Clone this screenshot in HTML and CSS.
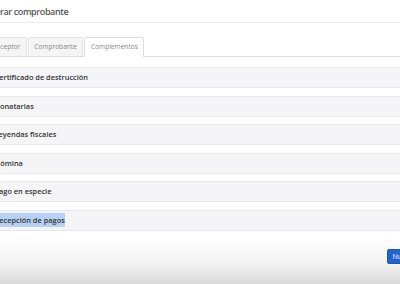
FILE: index.html
```html
<!DOCTYPE html>
<html lang="es">
<head>
    <meta charset="UTF-8">
    <meta name="viewport" content="width=device-width, initial-scale=1.0">
    <title>Generar comprobante</title>
    <link rel="stylesheet" href="styles.css">
</head>
<body>
    <div class="page">
        <div class="page-header">
            <h1>Generar comprobante</h1>
        </div>

        <ul class="tabs">
            <li class="tab">Receptor</li>
            <li class="tab">Comprobante</li>
            <li class="tab active">Complementos</li>
        </ul>

        <div class="panels">
            <div class="panel">Certificado de destrucción</div>
            <div class="panel">Donatarias</div>
            <div class="panel">Leyendas fiscales</div>
            <div class="panel">Nómina</div>
            <div class="panel">Pago en especie</div>
            <div class="panel"><span class="selected">Recepción de pagos</span></div>
        </div>

        <div class="actions">
            <button class="btn-primary">Nuevo</button>
        </div>
    </div>
</body>
</html>
```

FILE: styles.css
```css
* {
    margin: 0;
    padding: 0;
    box-sizing: border-box;
}

body {
    font-family: 'Open Sans', 'Liberation Sans', sans-serif;
    background: linear-gradient(to bottom, #fff 236px, #f4f4f4 262px, #d9d9d9 284px);
    min-height: 284px;
    color: #333;
    overflow: hidden;
}

.page {
    margin: 0 -30px 0 -14px;
}

.page-header {
    height: 23px;
    border-bottom: 1px solid #ebebeb;
}

.page-header h1 {
    font-size: 9px;
    font-weight: 600;
    color: #555;
    line-height: 22px;
    padding-top: 1px;
    letter-spacing: -0.4px;
    margin-left: -7px;
}

.tabs {
    list-style: none;
    display: flex;
    margin-top: 14px;
    height: 20px;
    border-bottom: 1px solid #ddd;
}

.tab {
    font-size: 6.6px;
    color: #888;
    line-height: 18px;
    padding: 0 5.5px;
    margin-right: 1px;
    background: #f5f5f5;
    border: 1px solid #e3e3e3;
    border-bottom: none;
    border-radius: 2px 2px 0 0;
}

.tab.active {
    background: #fff;
    border-color: #ddd;
    height: 20px;
}

.panels {
    display: flex;
    flex-direction: column;
    gap: 7.6px;
    margin-top: 10px;
}

.panel {
    height: 21px;
    line-height: 19px;
    padding: 0 7.5px;
    font-size: 7.4px;
    font-weight: 600;
    color: #333;
    background: #f5f5f7;
    border: 1px solid #e8e8ea;
    border-radius: 2px;
}

.selected {
    background: #b5d1f6;
    padding: 2px 0;
}

.actions {
    display: flex;
    justify-content: flex-end;
    margin-top: 18px;
}

.btn-primary {
    font-family: inherit;
    font-size: 7px;
    color: #fff;
    background: #2263d0;
    border: 1px solid #1d56b8;
    border-radius: 2px;
    height: 15px;
    width: 32px;
    margin-right: 11px;
}
```
